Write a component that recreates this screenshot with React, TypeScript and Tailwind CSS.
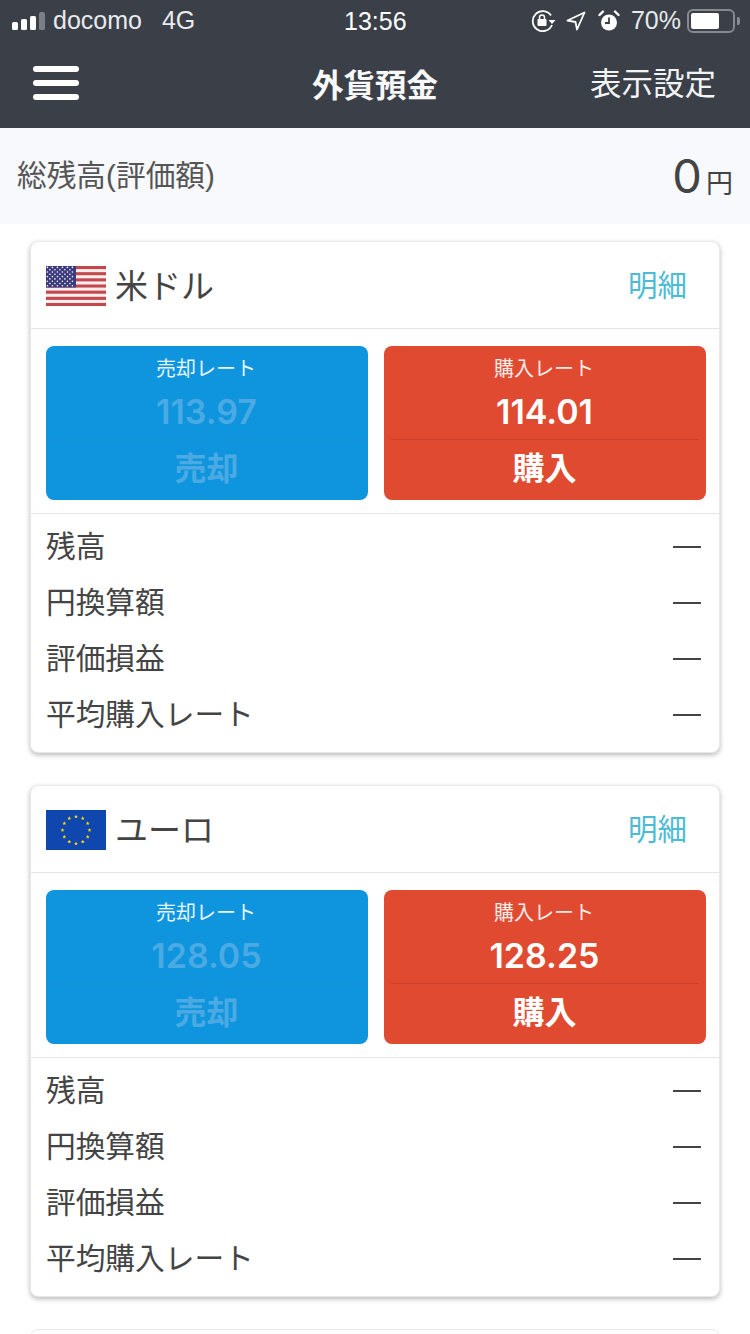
const cjk = "font-['Liberation_Sans','Noto_Sans_CJK_JP',sans-serif]";

const UsFlag = () => {
  const stripes = [0, 1, 2, 3, 4, 5, 6];
  const stars: { x: number; y: number }[] = [];
  for (let r = 0; r < 9; r++) {
    for (let c = 0; c < 11; c++) {
      if ((r + c) % 2 === 0) stars.push({ x: 1.4 + c * 2.5, y: 1.4 + r * 2.3 });
    }
  }
  return (
    <svg width="60" height="40" viewBox="0 0 60 40" className="mt-[1px] shrink-0">
      <rect width="60" height="40" fill="#f6eeee" />
      {stripes.map((i) => (
        <rect key={i} y={i * 6.16} width="60" height="3.08" fill="#c4474e" />
      ))}
      <rect width="30" height="21.5" fill="#3c3b7e" />
      {stars.map((s, i) => (
        <circle key={i} cx={s.x} cy={s.y} r="0.8" fill="#ffffff" />
      ))}
    </svg>
  );
};

const EuFlag = () => {
  const stars = Array.from({ length: 12 }, (_, i) => {
    const a = (i * Math.PI) / 6;
    return { x: 30 + Math.sin(a) * 13.5, y: 20 - Math.cos(a) * 13.5 };
  });
  return (
    <svg width="60" height="40" viewBox="0 0 60 40" className="mt-[1px] shrink-0">
      <rect width="60" height="40" fill="#0f47af" />
      {stars.map((s, i) => (
        <polygon
          key={i}
          transform={`translate(${s.x} ${s.y})`}
          points="0,-2 0.6,-0.6 2,-0.6 0.9,0.3 1.2,1.8 0,0.9 -1.2,1.8 -0.9,0.3 -2,-0.6 -0.6,-0.6"
          fill="#ffdd00"
        />
      ))}
    </svg>
  );
};

const StatusBar = () => (
  <div className="relative flex h-[42px] items-center justify-between pl-[12px] pr-[10px] text-[25px] text-[#e8eaed]">
    <div className="flex items-center">
      <svg width="34" height="20" viewBox="0 0 34 20" className="mr-[7px]">
        <rect x="0" y="11" width="6" height="8" rx="1.5" fill="#fff" />
        <rect x="9" y="8" width="6" height="11" rx="1.5" fill="#fff" />
        <rect x="18" y="5" width="6" height="14" rx="1.5" fill="#fff" />
        <rect x="27" y="1" width="6" height="18" rx="1.5" fill="#7a7e85" />
      </svg>
      <span>docomo</span>
      <span className="ml-[20px]">4G</span>
    </div>
    <span className="absolute left-[344px] top-[6px] leading-[30px] text-white">13:56</span>
    <div className="flex items-center">
      <svg width="26" height="24" viewBox="0 0 26 24" className="mr-[9px]" fill="none">
        <path d="M20 6.5A10 10 0 1 0 21 16" stroke="#fff" strokeWidth="1.8" />
        <path d="M17.5 11h7l-3.5 4z" fill="#fff" />
        <rect x="6.5" y="10" width="9" height="7" rx="1" fill="#fff" />
        <path d="M8.5 10V8.500a2.500 2.500 0 0 1 5 0V10" stroke="#fff" strokeWidth="1.500" />
      </svg>
      <svg width="20" height="20" viewBox="0 0 20 20" className="mr-[12px]" fill="none">
        <path d="M18.500 1.500 1.500 9.500l8 1.500 1.500 7.500z" stroke="#fff" strokeWidth="1.800" strokeLinejoin="round" />
      </svg>
      <svg width="22" height="22" viewBox="0 0 22 22" className="mr-[11px]" fill="none">
        <circle cx="11" cy="12.500" r="8" fill="#fff" />
        <path d="M11 7.500v5.500H7" stroke="#3a3f48" strokeWidth="1.800" />
        <path d="M1.500 5 5 1.500M20.500 5 17 1.500" stroke="#fff" strokeWidth="2.400" strokeLinecap="round" />
      </svg>
      <span>70%</span>
      <div className="ml-[6px] flex h-[24px] w-[48px] items-center rounded-[6px] border-2 border-[#868a90] p-[2px]">
        <div className="h-full w-[28px] rounded-[2px] bg-white" />
      </div>
      <div className="ml-[2px] h-[8px] w-[3px] rounded-r-[2px] bg-[#868a90]" />
    </div>
  </div>
);

const NavBar = () => (
  <div className="relative flex h-[86px] items-center justify-between pb-[5px] pl-[33px] pr-[34px]">
    <div className="flex w-[46px] flex-col gap-[8px]">
      <div className="h-[6px] rounded-full bg-white" />
      <div className="h-[6px] rounded-full bg-white" />
      <div className="h-[6px] rounded-full bg-white" />
    </div>
    <span className="absolute left-0 right-0 top-[22px] text-center text-[31.5px] font-bold leading-[44px] text-[#f8f8f8]">
      外貨預金
    </span>
    <span className="pt-[3px] text-[31.5px] leading-[44px] text-[#f2f3f4]">表示設定</span>
  </div>
);

const RateButton = ({
  label,
  rate,
  action,
  color,
  dim,
}: {
  label: string;
  rate: string;
  action: string;
  color: string;
  dim?: boolean;
}) => (
  <div className={`flex h-[154px] flex-1 flex-col items-center rounded-[8px] px-[7px] ${color}`}>
    <div className="mt-[8px] pr-[2px] text-[20px] leading-[30px] text-white/90">{label}</div>
    <div
      className={`h-[56px] w-full border-b pr-[1px] pt-[2px] text-center font-['Inter','Liberation_Sans',sans-serif] text-[34px] font-semibold leading-[52px] ${
        dim ? "border-[#1a8fd4] text-[#4ba9e4]" : "border-[#cc3f28] text-white"
      }`}
    >
      {rate}
    </div>
    <div className={`mt-[6px] pr-[1px] text-[32px] font-bold leading-[46px] ${dim ? "text-[#4ba9e4]" : "text-white"}`}>
      {action}
    </div>
  </div>
);

const rows = ["残高", "円換算額", "評価損益", "平均購入レート"];

const CurrencyCard = ({
  flag,
  name,
  sell,
  buy,
}: {
  flag: React.ReactNode;
  name: string;
  sell: string;
  buy: string;
}) => (
  <div className="rounded-[8px] border border-[#e9e9e9] bg-white shadow-[0_2px_5px_rgba(0,0,0,0.28)]">
    <div className="flex h-[87px] items-center justify-between border-b border-[#e6e6e6] pl-[15px] pr-[32px]">
      <div className="flex items-center gap-[9px]">
        {flag}
        <span className="pt-[3px] text-[33px] leading-[44px] text-[#444]">{name}</span>
      </div>
      <span className="pt-[2px] text-[29.5px] leading-[40px] text-[#4bbcd4]">明細</span>
    </div>
    <div className="flex gap-[16px] border-b border-[#e6e6e6] pb-[13px] pl-[15px] pr-[13px] pt-[17px]">
      <RateButton label="売却レート" rate={sell} action="売却" color="bg-[#0f95dd]" dim />
      <RateButton label="購入レート" rate={buy} action="購入" color="bg-[#e04a31]" />
    </div>
    <div className="pb-[9px] pl-[15px] pr-[18px] pt-[5px]">
      {rows.map((r) => (
        <div key={r} className="flex h-[56px] items-center justify-between">
          <span className="text-[29.7px] leading-[40px] text-[#444]">{r}</span>
          <div className="h-[2px] w-[28px] bg-[#444]" />
        </div>
      ))}
    </div>
  </div>
);

export default function App() {
  return (
    <div className={`h-[1334px] w-[750px] overflow-hidden bg-white ${cjk}`}>
      <div className="h-[128px] bg-[#3a3f48]">
        <StatusBar />
        <NavBar />
      </div>
      <div className="flex h-[96px] items-center justify-between bg-[#f7f9fc] px-[17px]">
        <span className="text-[29.7px] leading-[40px] text-[#555]">総残高(評価額)</span>
        <div className="flex items-baseline text-[#444]">
          <span className="font-['Inter','Liberation_Sans',sans-serif] text-[47px] font-normal leading-[60px]">0</span>
          <span className="ml-[4px] text-[27px]">円</span>
        </div>
      </div>
      <div className="flex flex-col gap-[32px] px-[30px] pt-[17px]">
        <CurrencyCard flag={<UsFlag />} name="米ドル" sell="113.97" buy="114.01" />
        <CurrencyCard flag={<EuFlag />} name="ユーロ" sell="128.05" buy="128.25" />
        <div className="h-[60px] rounded-[8px] border border-[#e9e9e9] bg-white" />
      </div>
    </div>
  );
}
